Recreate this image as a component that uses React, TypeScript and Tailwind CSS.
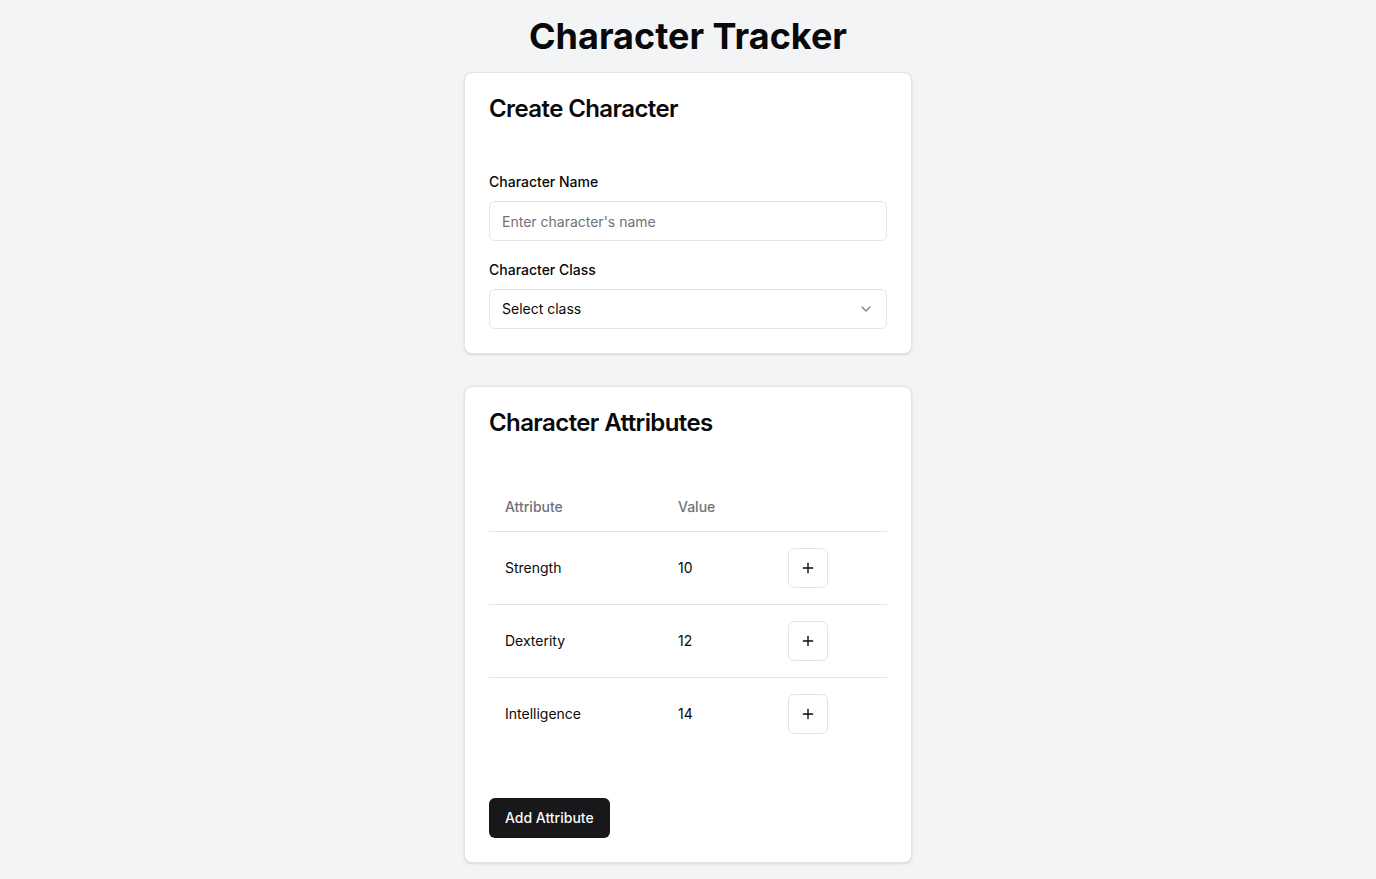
import React from "react";
import { Plus, ChevronDown } from "lucide-react";

const attributes = [
  { name: "Strength", value: 10 },
  { name: "Dexterity", value: 12 },
  { name: "Intelligence", value: 14 },
];

export default function App() {
  return (
    <div
      className="min-h-screen bg-[#f3f4f6] p-4 text-[#09090b]"
      style={{ fontFamily: "Inter, 'Noto Sans', sans-serif" }}
    >
      <h1 className="mb-4 text-center text-4xl font-bold">Character Tracker</h1>

      <div className="mx-auto mb-8 w-[448px] rounded-lg border border-[#e4e4e7] bg-white p-6 shadow-sm">
        <h2 className="text-2xl font-semibold leading-none tracking-tight">Create Character</h2>
        <div className="mt-[51px]">
          <label className="mb-[9px] block text-sm font-medium leading-5">Character Name</label>
          <input
            type="text"
            placeholder="Enter character's name"
            className="h-10 w-full rounded-md border border-[#e4e4e7] px-3 text-sm outline-none placeholder:text-[#71717a]"
          />
        </div>
        <div className="mt-[19px]">
          <label className="mb-[9px] block text-sm font-medium leading-5">Character Class</label>
          <button className="flex h-10 w-full items-center justify-between rounded-md border border-[#e4e4e7] px-3 text-sm">
            <span>Select class</span>
            <ChevronDown className="h-4 w-4 opacity-50" />
          </button>
        </div>
      </div>

      <div className="mx-auto w-[448px] rounded-lg border border-[#e4e4e7] bg-white p-6 shadow-sm">
        <h2 className="text-2xl font-semibold leading-none tracking-tight">Character Attributes</h2>
        <table className="mt-12 w-full text-sm">
          <thead>
            <tr className="border-b border-[#e4e4e7]">
              <th className="h-12 w-[173px] px-4 text-left font-medium text-[#71717a]">Attribute</th>
              <th className="h-12 w-[110px] px-4 text-left font-medium text-[#71717a]">Value</th>
              <th className="h-12 px-4"></th>
            </tr>
          </thead>
          <tbody>
            {attributes.map((a, i) => (
              <tr key={a.name} className={i < attributes.length - 1 ? "border-b border-[#e4e4e7]" : ""}>
                <td className="p-4">{a.name}</td>
                <td className="p-4">{a.value}</td>
                <td className="p-4">
                  <button className="flex h-10 w-10 items-center justify-center rounded-md border border-[#e4e4e7] bg-white">
                    <Plus className="h-4 w-4" />
                  </button>
                </td>
              </tr>
            ))}
          </tbody>
        </table>
        <button className="mt-12 h-10 rounded-md bg-[#18181b] px-4 text-sm font-medium text-[#fafafa]">
          Add Attribute
        </button>
      </div>
    </div>
  );
}
